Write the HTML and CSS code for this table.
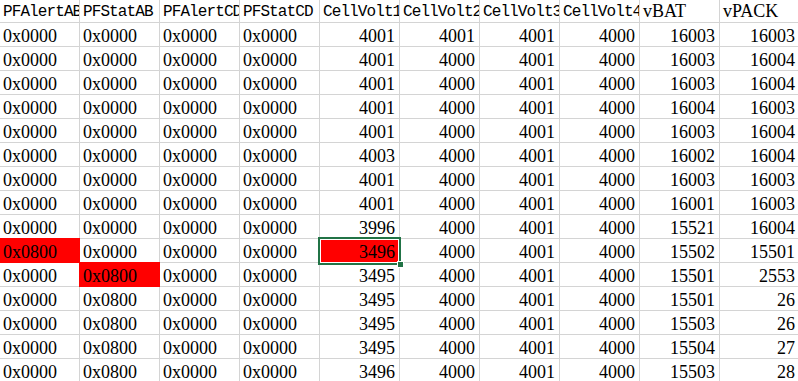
FILE: index.html
```
<!DOCTYPE html>
<html>
<head>
<meta charset="utf-8">
<link rel="stylesheet" href="styles.css">
</head>
<body>
<div class="sheet">
<div class="h mono">PFAlertAB</div><div class="h mono">PFStatAB</div><div class="h mono">PFAlertCD</div><div class="h mono">PFStatCD</div><div class="h mono">CellVolt1</div><div class="h mono">CellVolt2</div><div class="h mono">CellVolt3</div><div class="h mono">CellVolt4</div><div class="h">vBAT</div><div class="h">vPACK</div>

<div class="c">0x0000</div><div class="c">0x0000</div><div class="c">0x0000</div><div class="c">0x0000</div><div class="c n">4001</div><div class="c n">4001</div><div class="c n">4001</div><div class="c n">4000</div><div class="c n">16003</div><div class="c n">16003</div>
<div class="c">0x0000</div><div class="c">0x0000</div><div class="c">0x0000</div><div class="c">0x0000</div><div class="c n">4001</div><div class="c n">4000</div><div class="c n">4001</div><div class="c n">4000</div><div class="c n">16003</div><div class="c n">16004</div>
<div class="c">0x0000</div><div class="c">0x0000</div><div class="c">0x0000</div><div class="c">0x0000</div><div class="c n">4001</div><div class="c n">4000</div><div class="c n">4001</div><div class="c n">4000</div><div class="c n">16003</div><div class="c n">16004</div>
<div class="c">0x0000</div><div class="c">0x0000</div><div class="c">0x0000</div><div class="c">0x0000</div><div class="c n">4001</div><div class="c n">4000</div><div class="c n">4001</div><div class="c n">4000</div><div class="c n">16004</div><div class="c n">16003</div>
<div class="c">0x0000</div><div class="c">0x0000</div><div class="c">0x0000</div><div class="c">0x0000</div><div class="c n">4001</div><div class="c n">4000</div><div class="c n">4001</div><div class="c n">4000</div><div class="c n">16003</div><div class="c n">16004</div>
<div class="c">0x0000</div><div class="c">0x0000</div><div class="c">0x0000</div><div class="c">0x0000</div><div class="c n">4003</div><div class="c n">4000</div><div class="c n">4001</div><div class="c n">4000</div><div class="c n">16002</div><div class="c n">16004</div>
<div class="c">0x0000</div><div class="c">0x0000</div><div class="c">0x0000</div><div class="c">0x0000</div><div class="c n">4001</div><div class="c n">4000</div><div class="c n">4001</div><div class="c n">4000</div><div class="c n">16003</div><div class="c n">16003</div>
<div class="c">0x0000</div><div class="c">0x0000</div><div class="c">0x0000</div><div class="c">0x0000</div><div class="c n">4001</div><div class="c n">4000</div><div class="c n">4001</div><div class="c n">4000</div><div class="c n">16001</div><div class="c n">16003</div>
<div class="c">0x0000</div><div class="c">0x0000</div><div class="c">0x0000</div><div class="c">0x0000</div><div class="c n">3996</div><div class="c n">4000</div><div class="c n">4001</div><div class="c n">4000</div><div class="c n">15521</div><div class="c n">16004</div>
<div class="c red">0x0800</div><div class="c">0x0000</div><div class="c">0x0000</div><div class="c">0x0000</div><div class="c n red sel">3496</div><div class="c n">4000</div><div class="c n">4001</div><div class="c n">4000</div><div class="c n">15502</div><div class="c n">15501</div>
<div class="c">0x0000</div><div class="c red">0x0800</div><div class="c">0x0000</div><div class="c">0x0000</div><div class="c n">3495</div><div class="c n">4000</div><div class="c n">4001</div><div class="c n">4000</div><div class="c n">15501</div><div class="c n">2553</div>
<div class="c">0x0000</div><div class="c">0x0800</div><div class="c">0x0000</div><div class="c">0x0000</div><div class="c n">3495</div><div class="c n">4000</div><div class="c n">4001</div><div class="c n">4000</div><div class="c n">15501</div><div class="c n">26</div>
<div class="c">0x0000</div><div class="c">0x0800</div><div class="c">0x0000</div><div class="c">0x0000</div><div class="c n">3495</div><div class="c n">4000</div><div class="c n">4001</div><div class="c n">4000</div><div class="c n">15503</div><div class="c n">26</div>
<div class="c">0x0000</div><div class="c">0x0800</div><div class="c">0x0000</div><div class="c">0x0000</div><div class="c n">3495</div><div class="c n">4000</div><div class="c n">4001</div><div class="c n">4000</div><div class="c n">15504</div><div class="c n">27</div>
<div class="c">0x0000</div><div class="c">0x0800</div><div class="c">0x0000</div><div class="c">0x0000</div><div class="c n">3496</div><div class="c n">4000</div><div class="c n">4001</div><div class="c n">4000</div><div class="c n">15503</div><div class="c n">28</div>
</div>
</body>
</html>
```
FILE: styles.css
```
html, body {
  margin: 0;
  padding: 0;
  background: #ffffff;
  overflow: hidden;
}
.sheet {
  display: grid;
  grid-template-columns: repeat(10, 79px);
  grid-template-rows: 22px repeat(15, 23px);
  gap: 1px;
  background: #d4d4d4;
  width: 799px;
  font-family: "Liberation Serif", "Times New Roman", serif;
  font-size: 18px;
  color: #000;
}
.h {
  background: #fff;
  overflow: hidden;
  white-space: nowrap;
  padding: 1px 0 0 3px;
  line-height: 21px;
}
.h.mono {
  font-family: "Liberation Mono", "Courier New", monospace;
  font-size: 16px;
  letter-spacing: -0.9px;
  padding-top: 2px;
  line-height: 20px;
}
.c {
  background: #fff;
  white-space: nowrap;
  padding: 3px 3px 0 3px;
  line-height: 20px;
}
.n {
  text-align: right;
  padding-right: 4px;
}
.red {
  background: #ff0000;
  box-shadow: 0 0 0 1px #ff0000;
}
.sel {
  position: relative;
  z-index: 1;
}
.sel::before {
  content: "";
  position: absolute;
  left: -2px;
  top: -2px;
  right: -2px;
  bottom: -3px;
  border: 2px solid #217346;
  box-shadow: inset 0 0 0 1px #ffffff;
}
.sel::after {
  content: "";
  position: absolute;
  right: -5px;
  bottom: -6px;
  width: 5px;
  height: 5px;
  background: #217346;
  border: 1px solid #ffffff;
}
```
